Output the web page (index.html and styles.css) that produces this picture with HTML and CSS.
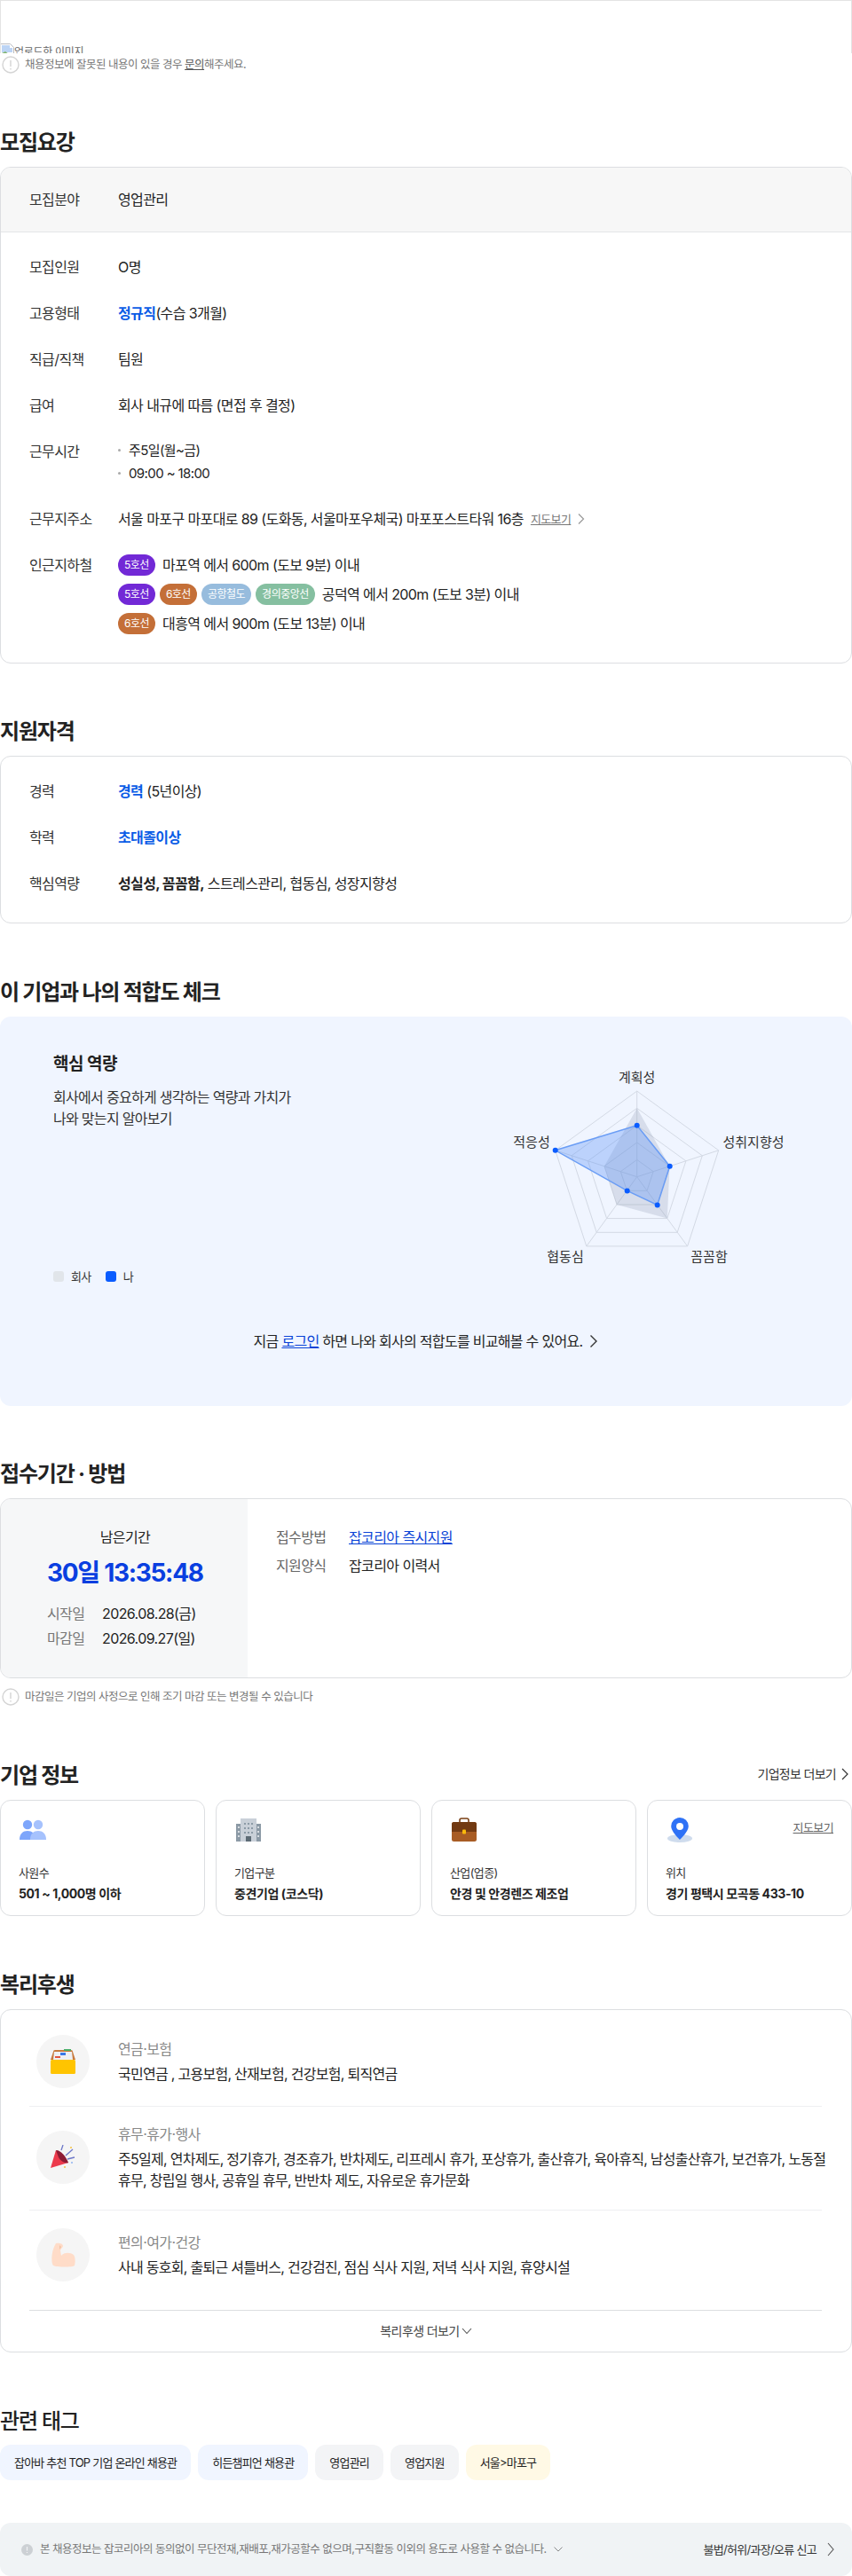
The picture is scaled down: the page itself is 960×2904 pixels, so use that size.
FILE: index.html
```html
<!DOCTYPE html>
<html lang="ko">
<head>
    <meta charset="UTF-8">
    <meta name="viewport" content="width=device-width, initial-scale=1.0">
    <title>채용정보 상세</title>
    <link rel="stylesheet" href="styles.css">
</head>
<body>
    <div class="top-box">
        <div class="broken-image">
            <svg width="16" height="16" viewBox="0 0 16 16">
                <path d="M.5.5h11l4 4v11H.5z" fill="#fff" stroke="#b9bcc2"/>
                <path d="M2 2h9v3h3v5H2z" fill="#bcd4f5"/>
                <path d="M2 14v-3l4-2 4 3 4-1v3z" fill="#7fb46f"/>
            </svg>
            <span>업로드한 이미지</span>
        </div>
    </div>
    <div class="note">
        <svg class="note-icon" width="20" height="20" viewBox="0 0 20 20" fill="none">
            <circle cx="10" cy="10" r="9" stroke="#d4d4d4" stroke-width="1.4"/>
            <path d="M10 5v7M10 14v1.4" stroke="#d4d4d4" stroke-width="1.4"/>
        </svg>
        <span>채용정보에 잘못된 내용이 있을 경우 <u>문의</u>해주세요.</span>
    </div>

    <section class="section section-first">
        <h2 class="section-title">모집요강</h2>
        <div class="box">
            <div class="box-head row">
                <div class="row-label">모집분야</div>
                <div class="row-value">영업관리</div>
            </div>
            <div class="rows">
                <div class="row">
                    <div class="row-label">모집인원</div>
                    <div class="row-value">O명</div>
                </div>
                <div class="row">
                    <div class="row-label">고용형태</div>
                    <div class="row-value"><b class="blue">정규직</b>(수습 3개월)</div>
                </div>
                <div class="row">
                    <div class="row-label">직급/직책</div>
                    <div class="row-value">팀원</div>
                </div>
                <div class="row">
                    <div class="row-label">급여</div>
                    <div class="row-value">회사 내규에 따름 (면접 후 결정)</div>
                </div>
                <div class="row">
                    <div class="row-label">근무시간</div>
                    <ul class="row-value dot-list">
                        <li>주5일(월~금)</li>
                        <li>09:00 ~ 18:00</li>
                    </ul>
                </div>
                <div class="row">
                    <div class="row-label">근무지주소</div>
                    <div class="row-value address">
                        서울 마포구 마포대로 89 (도화동, 서울마포우체국) 마포포스트타워 16층
                        <a class="map-link">지도보기</a>
                        <svg width="8" height="14" viewBox="0 0 8 14" fill="none"><path d="M1 1.5 6.5 7 1 12.5" stroke="#999" stroke-width="1.2"/></svg>
                    </div>
                </div>
                <div class="row">
                    <div class="row-label">인근지하철</div>
                    <div class="row-value subway-list">
                        <div class="subway">
                            <span class="line line-5">5호선</span>
                            <span class="subway-text">마포역 에서 600m (도보 9분) 이내</span>
                        </div>
                        <div class="subway">
                            <span class="line line-5">5호선</span>
                            <span class="line line-6">6호선</span>
                            <span class="line line-air">공항철도</span>
                            <span class="line line-gj">경의중앙선</span>
                            <span class="subway-text">공덕역 에서 200m (도보 3분) 이내</span>
                        </div>
                        <div class="subway">
                            <span class="line line-6">6호선</span>
                            <span class="subway-text">대흥역 에서 900m (도보 13분) 이내</span>
                        </div>
                    </div>
                </div>
            </div>
        </div>
    </section>

    <section class="section">
        <h2 class="section-title">지원자격</h2>
        <div class="box">
            <div class="rows">
                <div class="row">
                    <div class="row-label">경력</div>
                    <div class="row-value"><b class="blue">경력</b> (5년이상)</div>
                </div>
                <div class="row">
                    <div class="row-label">학력</div>
                    <div class="row-value"><b class="blue">초대졸이상</b></div>
                </div>
                <div class="row">
                    <div class="row-label">핵심역량</div>
                    <div class="row-value"><b>성실성, 꼼꼼함,</b> 스트레스관리, 협동심, 성장지향성</div>
                </div>
            </div>
        </div>
    </section>

    <section class="section section-fit">
        <h2 class="section-title">이 기업과 나의 적합도 체크</h2>
        <div class="fit-panel">
            <div class="fit-top">
                <div class="fit-text">
                    <h3 class="fit-title">핵심 역량</h3>
                    <p class="fit-desc">회사에서 중요하게 생각하는 역량과 가치가<br>나와 맞는지 알아보기</p>
                    <div class="legend">
                        <i class="swatch swatch-company"></i><span>회사</span>
                        <i class="swatch swatch-me"></i><span>나</span>
                    </div>
                </div>
                <svg class="radar" width="360" height="260" viewBox="-177.7 -138.7 360 260">
                    <g fill="none" stroke="#d3d9e4" stroke-width="1">
                        <polygon points="0,-96.7 92,-29.9 56.9,78.2 -56.9,78.2 -92,-29.9"/>
                        <polygon points="0,-77.4 73.6,-23.9 45.5,62.6 -45.5,62.6 -73.6,-23.9"/>
                        <polygon points="0,-58 55.2,-17.9 34.1,46.9 -34.1,46.9 -55.2,-17.9"/>
                        <polygon points="0,-38.7 36.8,-12 22.7,31.3 -22.7,31.3 -36.8,-12"/>
                        <polygon points="0,-19.3 18.4,-6 11.3,15.6 -11.3,15.6 -18.4,-6"/>
                        <path d="M0 0V-96.7M0 0 92-29.9M0 0 56.9 78.2M0 0-56.9 78.2M0 0-92-29.9"/>
                    </g>
                    <polygon points="0,-77.4 36.8,-12 34.1,46.9 -22.7,31.3 -36.8,-12" fill="#8d99ae" fill-opacity=".25"/>
                    <polygon points="0,-58 37,-12 23,31.7 -11,15.7 -92,-29.9" fill="#5b93f5" fill-opacity=".35" stroke="#6a9df5" stroke-width="1.5"/>
                    <g fill="#0a5cff">
                        <circle cx="0" cy="-58" r="3"/>
                        <circle cx="37" cy="-12" r="3"/>
                        <circle cx="23" cy="31.7" r="3"/>
                        <circle cx="-11" cy="15.7" r="3"/>
                        <circle cx="-92" cy="-29.9" r="3"/>
                    </g>
                    <g class="radar-label">
                        <text x="0" y="-112">계획성</text>
                        <text x="131.3" y="-39.7">성취지향성</text>
                        <text x="81.3" y="90.3">꼼꼼함</text>
                        <text x="-80.7" y="90.3">협동심</text>
                        <text x="-118.7" y="-39.7">적응성</text>
                    </g>
                </svg>
            </div>
            <div class="fit-login">
                <span>지금 <a class="link">로그인</a> 하면 나와 회사의 적합도를 비교해볼 수 있어요.</span>
                <svg width="10" height="16" viewBox="0 0 10 16" fill="none"><path d="M1.5 1.5 8 8l-6.500 6.500" stroke="#333" stroke-width="1.4"/></svg>
            </div>
        </div>
    </section>

    <section class="section section-apply">
        <h2 class="section-title">접수기간 · 방법</h2>
        <div class="box apply-box">
            <div class="apply-left">
                <div class="apply-remain">남은기간</div>
                <div class="apply-timer">30일 13:35:48</div>
                <dl class="apply-dates">
                    <dt>시작일</dt><dd>2026.08.28(금)</dd>
                    <dt>마감일</dt><dd>2026.09.27(일)</dd>
                </dl>
            </div>
            <dl class="apply-right">
                <dt>접수방법</dt><dd><a class="link">잡코리아 즉시지원</a></dd>
                <dt>지원양식</dt><dd>잡코리아 이력서</dd>
            </dl>
        </div>
        <div class="note note-apply">
            <svg class="note-icon" width="20" height="20" viewBox="0 0 20 20" fill="none">
                <circle cx="10" cy="10" r="9" stroke="#d4d4d4" stroke-width="1.4"/>
                <path d="M10 5v7M10 14v1.4" stroke="#d4d4d4" stroke-width="1.4"/>
            </svg>
            <span>마감일은 기업의 사정으로 인해 조기 마감 또는 변경될 수 있습니다</span>
        </div>
    </section>

    <section class="section section-company">
        <div class="title-line">
            <h2 class="section-title">기업 정보</h2>
            <a class="more-link">기업정보 더보기
                <svg width="8" height="14" viewBox="0 0 8 14" fill="none"><path d="M1 1 7 7l-6 6" stroke="#333" stroke-width="1.2"/></svg>
            </a>
        </div>
        <div class="cards">
            <div class="card">
                <svg class="card-icon" width="32" height="28" viewBox="0 0 32 28">
                    <circle cx="10" cy="8" r="5.2" fill="#7ea6fb"/>
                    <path d="M1 25c0-7 4-10 9-10s9 3 9 10z" fill="#7ea6fb"/>
                    <circle cx="22" cy="8" r="5.2" fill="#a6c2fd"/>
                    <path d="M13 25c0-7 4-10 9-10s9 3 9 10z" fill="#a6c2fd"/>
                </svg>
                <div class="card-label">사원수</div>
                <div class="card-value">501 ~ 1,000명 이하</div>
            </div>
            <div class="card">
                <svg class="card-icon" width="32" height="28" viewBox="0 0 32 28">
                    <path d="M2 7h7v20H2zM23 7h7v20h-7z" fill="#8c9aa6"/>
                    <path d="M7 1h18v26H7z" fill="#c9d0d8"/>
                    <path d="M13 21h6v6h-6z" fill="#5d6b75"/>
                    <path d="M11 6h2v2h-2zM15 6h2v2h-2zM19 6h2v2h-2zM11 11h2v2h-2zM15 11h2v2h-2zM19 11h2v2h-2zM11 16h2v2h-2zM15 16h2v2h-2zM19 16h2v2h-2z" fill="#8c9aa6"/>
                    <path d="M4 10h2v2H4zM4 15h2v2H4zM4 20h2v2H4zM26 10h2v2h-2zM26 15h2v2h-2zM26 20h2v2h-2z" fill="#d9dee3"/>
                </svg>
                <div class="card-label">기업구분</div>
                <div class="card-value">중견기업 (코스닥)</div>
            </div>
            <div class="card">
                <svg class="card-icon" width="32" height="28" viewBox="0 0 32 28">
                    <path d="M11 5V3a2 2 0 0 1 2-2h6a2 2 0 0 1 2 2v2" fill="none" stroke="#7a4016" stroke-width="1.6"/>
                    <rect x="2" y="5" width="28" height="22" rx="2.5" fill="#a85c24"/>
                    <path d="M2 7.5A2.5 2.5 0 0 1 4.500 5h23A2.500 2.500 0 0 1 30 7.500V16H2z" fill="#723a12"/>
                    <rect x="14" y="13.500" width="4" height="5" rx="1" fill="#f9b90b"/>
                </svg>
                <div class="card-label">산업(업종)</div>
                <div class="card-value">안경 및 안경렌즈 제조업</div>
            </div>
            <div class="card">
                <a class="card-map">지도보기</a>
                <svg class="card-icon" width="32" height="28" viewBox="0 0 32 28">
                    <ellipse cx="16" cy="23.500" rx="14" ry="4.500" fill="#cfdced"/>
                    <path d="M16 0a9.800 9.800 0 0 0-9.800 9.800C6.200 16 16 25 16 25s9.800-9 9.800-15.200A9.800 9.800 0 0 0 16 0z" fill="#2f72f6"/>
                    <circle cx="16" cy="10" r="4" fill="#fff"/>
                </svg>
                <div class="card-label">위치</div>
                <div class="card-value">경기 평택시 모곡동 433-10</div>
            </div>
        </div>
    </section>

    <section class="section section-welfare">
        <h2 class="section-title">복리후생</h2>
        <div class="box welfare-box">
            <div class="welfare">
                <div class="welfare-icon">
                    <svg width="28" height="28" viewBox="0 0 28 28">
                        <path d="M3 3a2 2 0 0 1 2-2h18a2 2 0 0 1 2 2l3 9H0z" fill="#c77a3e"/>
                        <path d="M4 3h20l1 9H3z" fill="#eef0f3"/>
                        <path d="M11 4h6v3h-6z" fill="#3b78e7"/>
                        <path d="M5 8h6v2H5z" fill="#e2553f"/>
                        <path d="M15 0h8v2h-8z" fill="#4bb06b"/>
                        <rect y="12" width="28" height="16" rx="1.500" fill="#ffc400"/>
                    </svg>
                </div>
                <div class="welfare-body">
                    <div class="welfare-cat">연금·보험</div>
                    <div class="welfare-list">국민연금 , 고용보험, 산재보험, 건강보험, 퇴직연금</div>
                </div>
            </div>
            <div class="welfare">
                <div class="welfare-icon">
                    <svg width="28" height="28" viewBox="0 0 28 28">
                        <path d="M0 26 6 6l14 14z" fill="#ec3a4c"/>
                        <path d="M6 6c4-1 11 6 14 14-4 1-9-2-11-6z" fill="#8d1c34"/>
                        <path d="M12 6l2-6M17 12l8-7M19 16l8-2" stroke="#6d78c8" stroke-width="1.300"/>
                        <circle cx="23" cy="3" r="1" fill="#f5c242"/>
                        <circle cx="24" cy="20" r="1" fill="#8fb2f0"/>
                        <circle cx="16" cy="25" r="1" fill="#f5c242"/>
                    </svg>
                </div>
                <div class="welfare-body">
                    <div class="welfare-cat">휴무·휴가·행사</div>
                    <div class="welfare-list">주5일제, 연차제도, 정기휴가, 경조휴가, 반차제도, 리프레시 휴가, 포상휴가, 출산휴가, 육아휴직, 남성출산휴가, 보건휴가, 노동절 휴무, 창립일 행사, 공휴일 휴무, 반반차 제도, 자유로운 휴가문화</div>
                </div>
            </div>
            <div class="welfare">
                <div class="welfare-icon">
                    <svg width="28" height="28" viewBox="0 0 28 28">
                        <path d="M6 1c3-1 8 0 8 3 0 2-3 3-3 5l1 6c3-4 10-4 14-1 2 2 2 9 1 12-2 2-20 2-24 0C0 22 1 9 6 1z" fill="#ffdcc8"/>
                        <path d="M10 3l2 2-2 3z" fill="#f3c2a6"/>
                    </svg>
                </div>
                <div class="welfare-body">
                    <div class="welfare-cat">편의·여가·건강</div>
                    <div class="welfare-list">사내 동호회, 출퇴근 셔틀버스, 건강검진, 점심 식사 지원, 저녁 식사 지원, 휴양시설</div>
                </div>
            </div>
            <div class="welfare-more">복리후생 더보기
                <svg width="12" height="8" viewBox="0 0 12 8" fill="none"><path d="M1 1l5 5.500L11 1" stroke="#555" stroke-width="1.100"/></svg>
            </div>
        </div>
    </section>

    <section class="section section-tags">
        <h2 class="section-title title-light">관련 태그</h2>
        <div class="tags">
            <span class="tag tag-blue">잡아바 추천 TOP 기업 온라인 채용관</span>
            <span class="tag tag-blue">히든챔피언 채용관</span>
            <span class="tag">영업관리</span>
            <span class="tag">영업지원</span>
            <span class="tag tag-yellow">서울&gt;마포구</span>
        </div>
    </section>

    <div class="footer-bar">
        <div class="footer-notice">
            <svg width="13" height="13" viewBox="0 0 13 13"><circle cx="6.500" cy="6.500" r="6.500" fill="#ccd0d4"/><path d="M6.500 3v4.500M6.500 9v1" stroke="#f0f3f5" stroke-width="1.200"/></svg>
            <span>본 채용정보는 잡코리아의 동의없이 무단전재,재배포,재가공할수 없으며,구직활동 이외의 용도로 사용할 수 없습니다.</span>
            <svg width="10" height="6" viewBox="0 0 10 6" fill="none"><path d="M.5.500 5 5 9.500.500" stroke="#888"/></svg>
        </div>
        <a class="footer-report">불법/허위/과장/오류 신고
            <svg width="8" height="16" viewBox="0 0 8 16" fill="none"><path d="M1 1l6 7-6 7" stroke="#555" stroke-width="1.100"/></svg>
        </a>
    </div>
</body>
</html>
```

FILE: styles.css
```css
body {
    margin: 0;
    padding: 0;
    font-family: Inter, "Noto Sans CJK KR", sans-serif;
    font-size: 16px;
    line-height: 24px;
    letter-spacing: -0.6px;
    color: #222;
    background-color: #ffffff;
}

.top-box {
    height: 60px;
    box-sizing: border-box;
    border: 1px solid #e3e3e3;
    border-bottom: none;
    padding-top: 48px;
    overflow: hidden;
}

.broken-image {
    display: flex;
    align-items: flex-start;
    font-size: 12px;
    line-height: 20px;
    letter-spacing: -0.3px;
    color: #666;
    margin-left: -1px;
}

.broken-image svg {
    flex-shrink: 0;
}

.note {
    display: flex;
    align-items: center;
    gap: 6px;
    margin-top: 3px;
    padding-left: 2px;
    height: 20px;
    font-size: 12.5px;
    letter-spacing: -0.5px;
    color: #777;
}

.note-icon {
    flex-shrink: 0;
}

.note u {
    color: #555;
}

.section {
    margin-top: 59px;
}

.section-first {
    margin-top: 60px;
}

.section-title {
    margin: 0 0 11px;
    padding-top: 2px;
    font-size: 24px;
    line-height: 32px;
    font-weight: 700;
    letter-spacing: -1.2px;
    color: #222;
}

.title-light {
    font-weight: 500;
    margin-bottom: 10px;
}

.box {
    border: 1px solid #dcdee1;
    border-radius: 12px;
    overflow: hidden;
}

.box-head {
    height: 73px;
    box-sizing: border-box;
    align-items: center;
    background-color: #f7f7f7;
    border-bottom: 1px solid #e4e5e7;
}

.rows {
    display: flex;
    flex-direction: column;
    gap: 28px;
    padding: 27px 0 32px;
}

.row {
    display: flex;
    padding-left: 32px;
}

.row-label {
    width: 100px;
    flex-shrink: 0;
    color: #333;
}

.row-value {
    color: #222;
}

.blue {
    color: #0a5ce6;
}

.dot-list {
    list-style: none;
    margin: 0;
    padding: 0;
    display: flex;
    flex-direction: column;
    gap: 4px;
}

.dot-list li {
    padding-left: 12px;
    position: relative;
    font-size: 15px;
    line-height: 22px;
}

.dot-list li::before {
    content: "";
    position: absolute;
    left: 0;
    top: 9px;
    width: 3px;
    height: 3px;
    border-radius: 50%;
    background-color: #aaa;
}

.address {
    display: flex;
    align-items: center;
    gap: 8px;
}

.map-link {
    font-size: 13px;
    color: #777;
    text-decoration: underline;
}

.subway-list {
    display: flex;
    flex-direction: column;
    gap: 9px;
}

.subway {
    display: flex;
    align-items: center;
    gap: 5px;
}

.subway-text {
    margin-left: 3px;
}

.line {
    height: 24px;
    padding: 0 7px;
    border-radius: 12px;
    font-size: 12px;
    line-height: 24px;
    letter-spacing: -0.5px;
    color: #fff;
}

.line-5 {
    background-color: #7229d6;
}

.line-6 {
    background-color: #c46f38;
}

.line-air {
    background-color: #97bcdd;
}

.line-gj {
    background-color: #85bfa0;
}

.section-fit {
    margin-top: 60px;
}

.fit-panel {
    height: 439px;
    box-sizing: border-box;
    padding: 42px 60px 0;
    border-radius: 12px;
    background-color: #f0f5ff;
}

.fit-top {
    display: flex;
    justify-content: space-between;
    height: 263px;
}

.fit-text {
    display: flex;
    flex-direction: column;
}

.fit-title {
    margin: 0 0 13px;
    font-size: 19px;
    line-height: 24px;
    font-weight: 700;
    letter-spacing: -0.5px;
}

.fit-desc {
    margin: 0;
    letter-spacing: -0.7px;
    color: #333;
}

.legend {
    margin-top: auto;
    display: flex;
    align-items: center;
    font-size: 13px;
    color: #333;
}

.swatch {
    width: 12px;
    height: 12px;
    border-radius: 3px;
    margin-right: 8px;
}

.swatch-company {
    background-color: #e1e5ea;
}

.swatch-me {
    background-color: #0a5cff;
    margin-left: 16px;
}

.radar {
    display: block;
}

.radar-label text {
    font-size: 15px;
    fill: #333;
    text-anchor: middle;
    dominant-baseline: central;
    letter-spacing: 0;
}

.fit-login {
    margin-top: 49px;
    display: flex;
    align-items: center;
    justify-content: center;
    gap: 8px;
    letter-spacing: -0.7px;
}

.link {
    color: #0a43d6;
    text-decoration: underline;
}

.apply-box {
    display: flex;
    height: 203px;
    box-sizing: border-box;
}

.apply-left {
    width: 278px;
    box-sizing: border-box;
    padding: 31px 0 0 52px;
    background-color: #f6f7f8;
}

.apply-remain {
    width: 176px;
    text-align: center;
}

.apply-timer {
    margin-top: 8px;
    font-size: 28px;
    line-height: 40px;
    font-weight: 700;
    letter-spacing: -1.3px;
    color: #0a3fe0;
    white-space: nowrap;
}

.apply-dates {
    display: grid;
    grid-template-columns: 62px auto;
    row-gap: 4px;
    margin: 14px 0 0;
}

.apply-dates dt {
    color: #777;
}

.apply-dates dd {
    margin: 0;
}

.apply-right {
    display: grid;
    grid-template-columns: 82px auto;
    grid-auto-rows: 24px;
    row-gap: 8px;
    align-content: start;
    margin: 31px 0 0 32px;
}

.apply-right dt {
    color: #666;
}

.apply-right dd {
    margin: 0;
}

.note-apply {
    margin-top: 11px;
}

.section-company {
    margin-top: 61px;
}

.title-line {
    display: flex;
    justify-content: space-between;
    align-items: center;
}

.more-link {
    display: flex;
    align-items: center;
    gap: 6px;
    margin: 0 4px 13px 0;
    font-size: 14px;
    letter-spacing: -0.7px;
    color: #333;
}

.cards {
    display: grid;
    grid-template-columns: repeat(4, 1fr);
    gap: 12px;
}

.card {
    position: relative;
    height: 131px;
    box-sizing: border-box;
    padding: 19px 20px 0;
    border: 1px solid #dcdee1;
    border-radius: 12px;
}

.card-icon {
    display: block;
    margin-bottom: 22px;
}

.card-label {
    font-size: 13px;
    color: #333;
}

.card-value {
    font-size: 14px;
    font-weight: 700;
    letter-spacing: -0.4px;
    white-space: nowrap;
}

.card-map {
    position: absolute;
    top: 18px;
    right: 20px;
    font-size: 13px;
    color: #666;
    text-decoration: underline;
}

.section-welfare {
    margin-top: 60px;
}

.welfare {
    display: flex;
    align-items: center;
    margin: 0 33px 0 32px;
    border-bottom: 1px solid #eeeff1;
}

.welfare:nth-child(1) {
    padding: 28px 0 20px;
}

.welfare:nth-child(2) {
    padding: 19px 0 21px;
}

.welfare:nth-child(3) {
    padding: 20px 0 32px;
    border-bottom-color: #dcdee1;
}

.welfare-icon {
    width: 60px;
    height: 60px;
    margin: 0 32px 0 8px;
    flex-shrink: 0;
    display: flex;
    align-items: center;
    justify-content: center;
    border-radius: 50%;
    background-color: #f5f5f5;
}

.welfare-body {
    margin-right: -16px;
}

.welfare-cat {
    margin-bottom: 4px;
    color: #888;
}

.welfare-list {
    word-break: keep-all;
    letter-spacing: -0.72px;
}

.welfare-more {
    height: 46px;
    display: flex;
    align-items: center;
    justify-content: center;
    gap: 2px;
    font-size: 14px;
    color: #444;
}

.section-tags {
    margin-top: 60px;
}

.tags {
    display: flex;
    gap: 8px;
}

.tag {
    height: 40px;
    padding: 0 16px;
    border-radius: 12px;
    font-size: 13px;
    line-height: 40px;
    letter-spacing: -0.8px;
    background-color: #f3f4f6;
}

.tag-blue {
    background-color: #f0f5ff;
}

.tag-yellow {
    background-color: #fff9e5;
}

.footer-bar {
    margin-top: 48px;
    height: 60px;
    box-sizing: border-box;
    padding: 0 20px 0 24px;
    display: flex;
    justify-content: space-between;
    align-items: center;
    border-radius: 12px;
    background-color: #f0f3f5;
}

.footer-notice {
    display: flex;
    align-items: center;
    gap: 8px;
    font-size: 12.5px;
    letter-spacing: -0.5px;
    color: #777;
}

.footer-report {
    display: flex;
    align-items: center;
    gap: 12px;
    font-size: 13px;
    letter-spacing: -0.7px;
    color: #333;
}
```
